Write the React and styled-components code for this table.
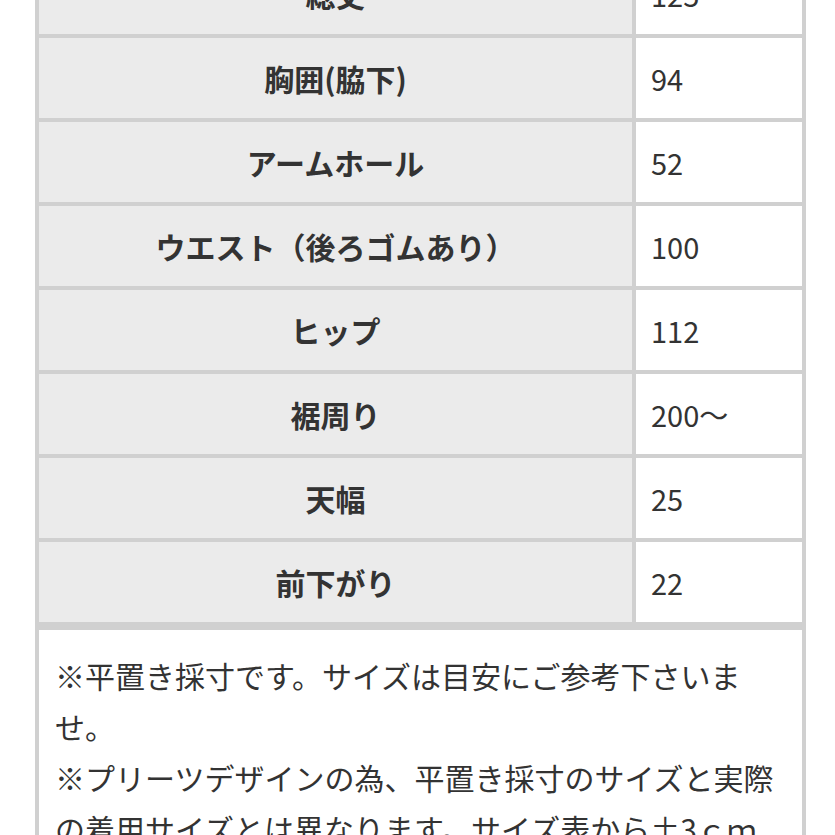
import React from "react";
import styled, { createGlobalStyle } from "styled-components";

const GlobalStyle = createGlobalStyle`
  html, body {
    margin: 0;
    padding: 0;
    background: #ffffff;
  }
  body {
    font-family: "Noto Sans CJK JP", "Noto Sans", sans-serif;
    color: #333333;
  }
`;

const Viewport = styled.div`
  width: 835px;
  height: 835px;
  overflow: hidden;
  background: #ffffff;
`;

const Sheet = styled.div`
  width: 771px;
  margin: -50px 0 0 35px;
  display: flex;
  flex-direction: column;
`;

const SizeTable = styled.div`
  display: grid;
  grid-template-columns: 593px 166px;
  grid-auto-rows: 80px;
  gap: 4px;
  padding: 4px;
  background: #d0d0d0;
`;

const HeadCell = styled.div`
  background: #ebebeb;
  display: flex;
  align-items: center;
  justify-content: center;
  font-size: 30px;
  font-weight: 700;
  color: #333333;
  white-space: nowrap;
`;

const ValueCell = styled.div`
  background: #ffffff;
  display: flex;
  align-items: center;
  padding-left: 15px;
  font-size: 29px;
  font-weight: 400;
  color: #333333;
  white-space: nowrap;
`;

const Notes = styled.div`
  background: #ffffff;
  border: 4px solid #d0d0d0;
  border-bottom: none;
  padding: 20px 16px 16px 16px;
  font-size: 30px;
  line-height: 51px;
  color: #333333;
  line-break: strict;
`;

const NoteLine = styled.p`
  margin: 0;
`;

const rows = [
  ["総丈", "125"],
  ["胸囲(脇下)", "94"],
  ["アームホール", "52"],
  ["ウエスト（後ろゴムあり）", "100"],
  ["ヒップ", "112"],
  ["裾周り", "200～"],
  ["天幅", "25"],
  ["前下がり", "22"],
];

export default function App() {
  return (
    <>
      <GlobalStyle />
      <Viewport>
        <Sheet>
          <SizeTable>
            {rows.map(([label, value]) => (
              <React.Fragment key={label}>
                <HeadCell>{label}</HeadCell>
                <ValueCell>{value}</ValueCell>
              </React.Fragment>
            ))}
          </SizeTable>
          <Notes>
            <NoteLine>※平置き採寸です。サイズは目安にご参考下さいませ。</NoteLine>
            <NoteLine>
              ※プリーツデザインの為、平置き採寸のサイズと実際の着用サイズとは異なります。サイズ表から±3ｃｍ程度の誤差がございます。
            </NoteLine>
          </Notes>
        </Sheet>
      </Viewport>
    </>
  );
}
